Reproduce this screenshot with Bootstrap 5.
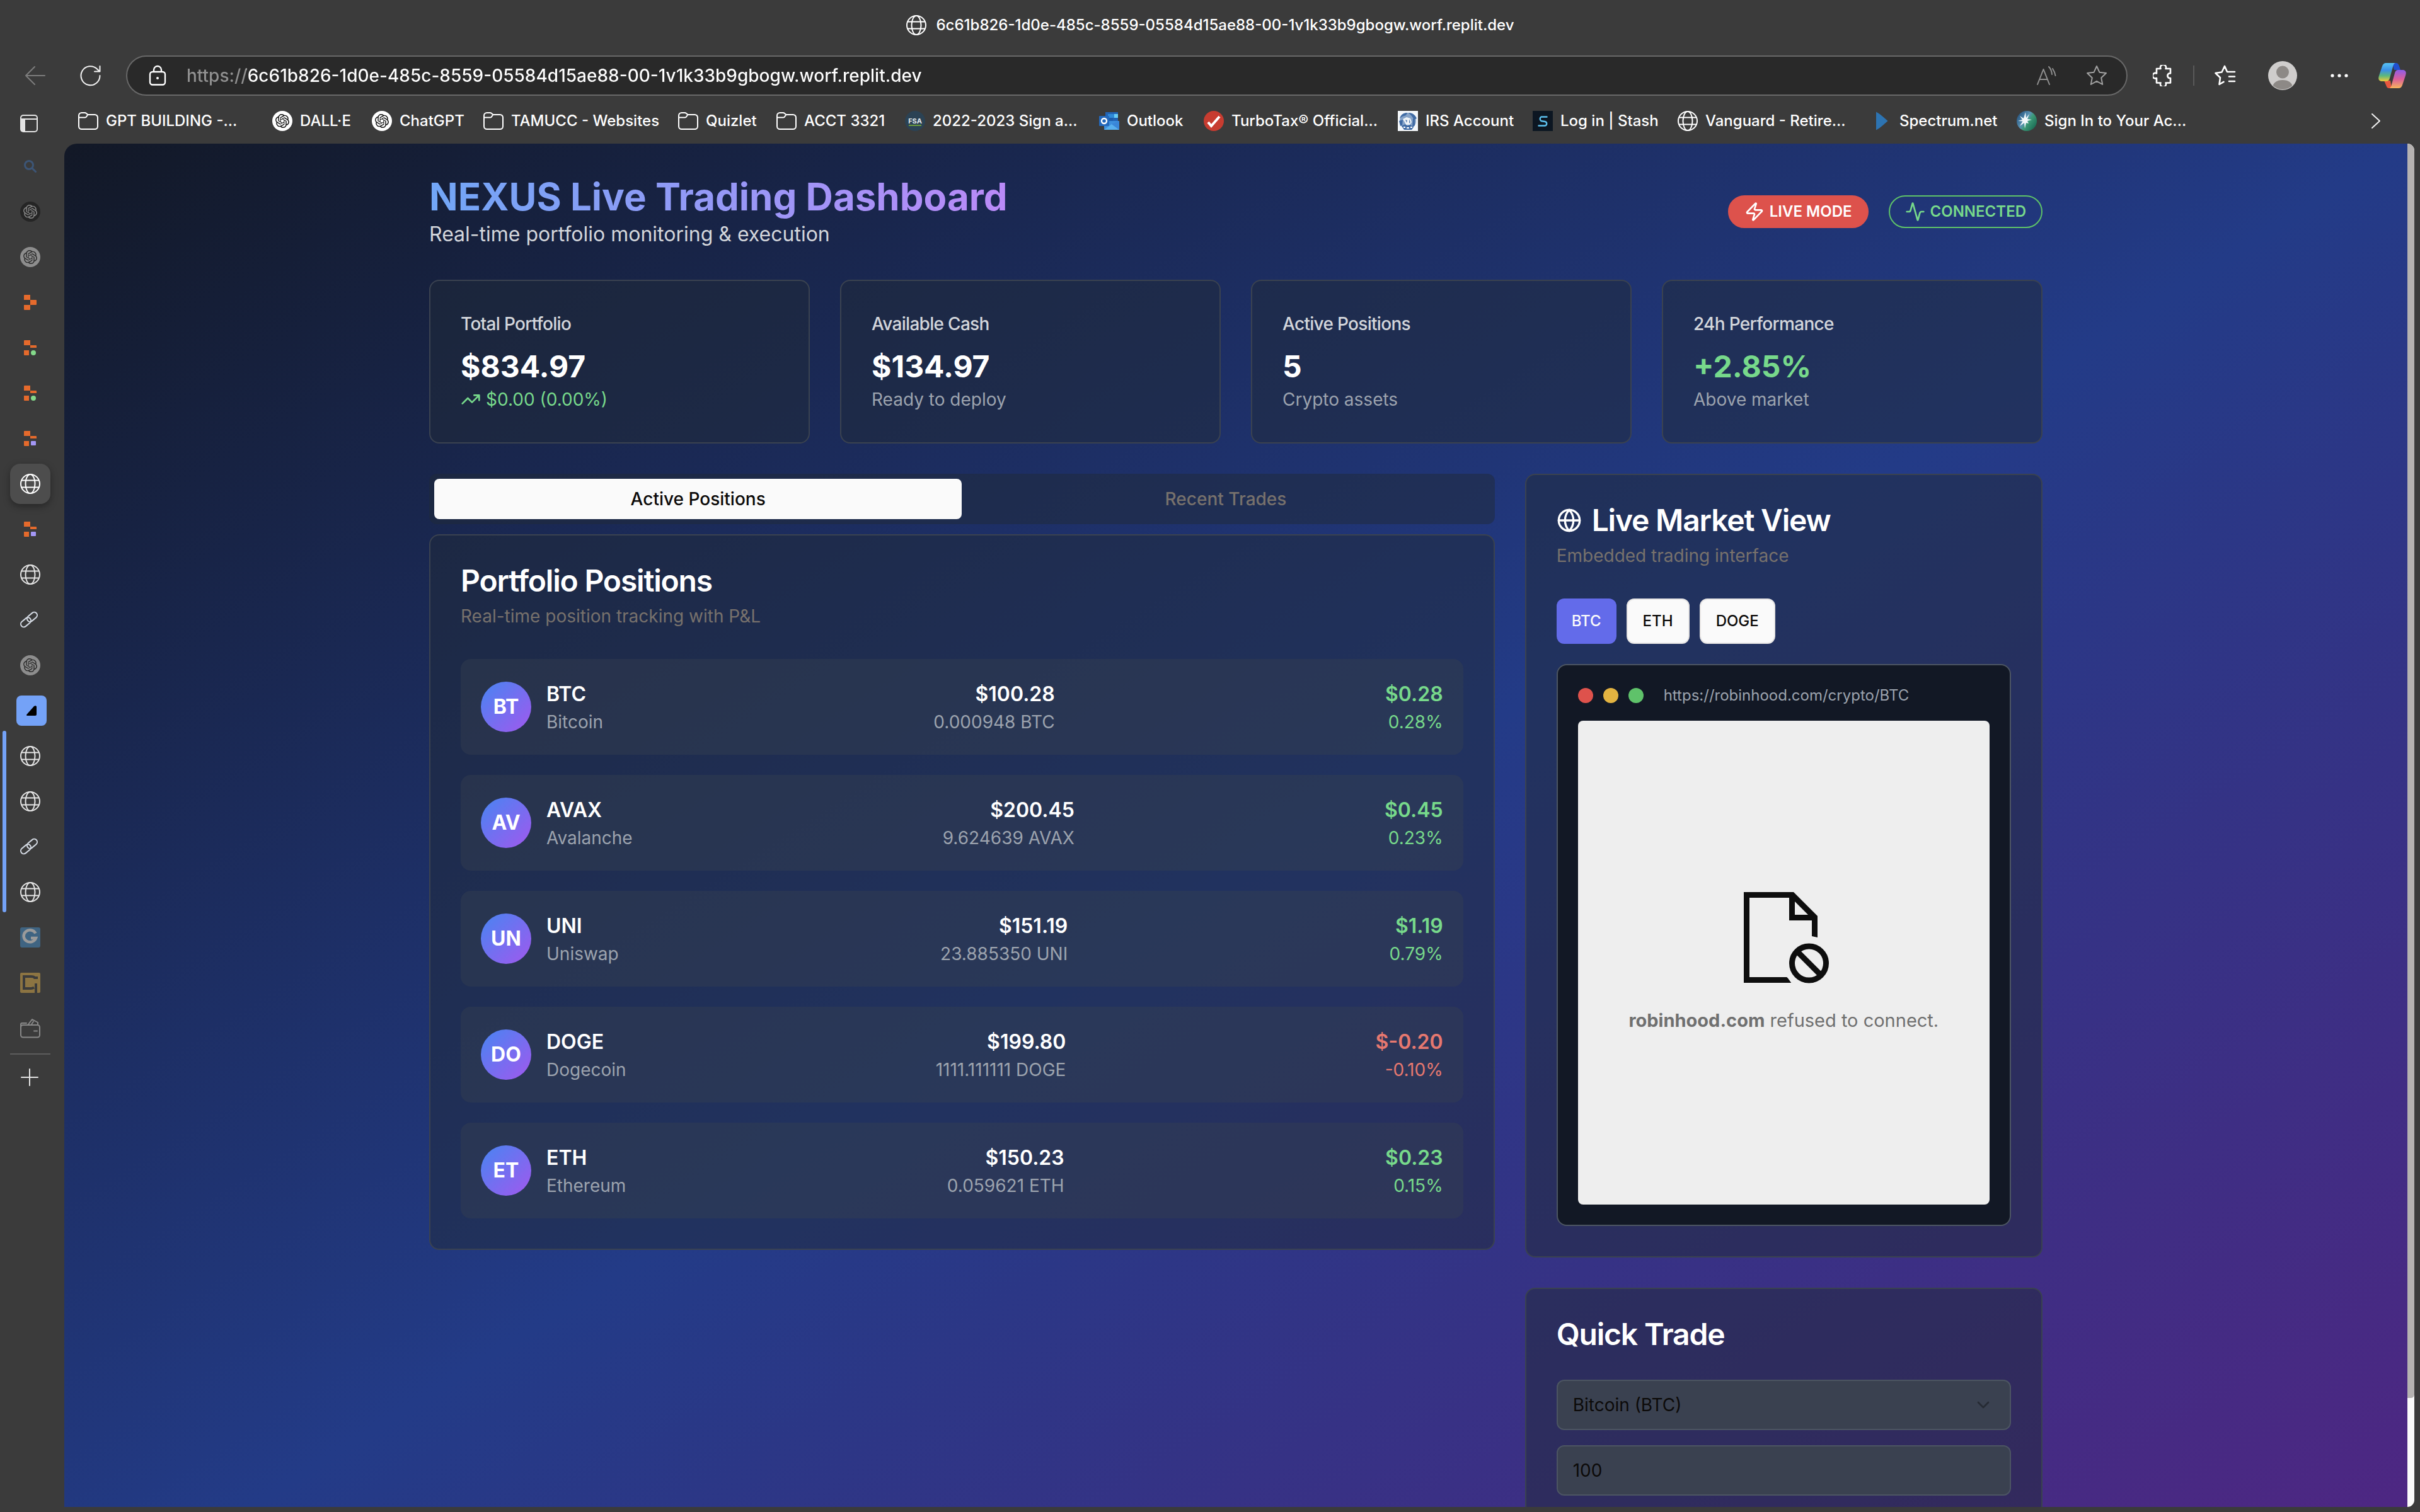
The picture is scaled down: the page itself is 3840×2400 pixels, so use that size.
<!DOCTYPE html>
<html lang="en">
<head>
<meta charset="utf-8">
<meta name="viewport" content="width=device-width, initial-scale=1">
<title>NEXUS Live Trading Dashboard</title>
<link href="https://cdn.jsdelivr.net/npm/bootstrap@5.3.0/dist/css/bootstrap.min.css" rel="stylesheet">
<style>
:root { font-size: 32px; }
body {
  font-family: Inter, "Liberation Sans", sans-serif;
  font-size: 32px; line-height: 48px;
  background: #3b3b3b; color: #fff;
  height: 100vh; overflow: hidden;
}
svg { display: block; flex: none; }
button { font-family: inherit; }
.stroke-ic { fill: none; stroke: currentColor; stroke-width: 2; stroke-linecap: round; stroke-linejoin: round; }
.fill-rest { min-width: 0; min-height: 0; }

/* window chrome */
.title-strip { height: 80px; flex: none; font-size: 24px; line-height: 32px; font-weight: 500; gap: 16px; }
.tool-strip { height: 76px; flex: none; padding: 4px 22px 0 40px; }
.ic-btn { background: none; border: 0; padding: 0; color: #f2f2f2; display: flex; align-items: center; justify-content: center; flex: none; }
.ic-back { color: #7c7c7c; margin-right: 52px; }
.ic-read { color: #909090; margin-right: 46px; }
.ic-star { color: #a0a0a0; }
.ic-ext { margin-left: 40px; }
.ic-far { margin-left: 50px; }
.ic-end { margin-left: 46px; }
.addr { height: 64px; margin-left: 36px; border: 2px solid #686868; border-radius: 32px; background: #292929; padding: 0 30px 0 34px; color: #909090; }
.addr input {
  border: 0; outline: 0; padding: 0; min-width: 0; height: 48px;
  font-size: 28px; font-weight: 500; color: transparent;
  background: linear-gradient(90deg, #909090 95px, #fff 95px);
  -webkit-background-clip: text; background-clip: text;
}
.tool-rule { width: 2px; height: 32px; background: #5a5a5a; }

.side { width: 102px; position: relative; }
.side .ic-btn { width: 96px; height: 72px; color: #e4e4e4; }
.side .cell-top { width: 92px; padding-top: 8px; }
.side .cell-add { width: 94px; }
.side .pill { width: 64px; height: 64px; border-radius: 16px; background: #4d4d4d; box-shadow: 0 4px 12px rgba(0,0,0,.35); display: flex; align-items: center; justify-content: center; color: #fff; }
.side .tile { width: 48px; height: 48px; border-radius: 8px; background: #74a2f7; margin-left: 4px; display: flex; align-items: center; justify-content: center; }
.side .group-bar { position: absolute; left: 4px; top: 1004px; width: 6px; height: 288px; border-radius: 3px; background: #74a2f7; }
.side hr { width: 64px; margin: 4px 0 0 16px; border-top: 2px solid #5c5c5c; opacity: 1; }

.marks {
  height: 72px; flex: none; padding-left: 22px; display: grid; align-items: center;
  grid-template-columns: 308px 158px 177px 309px 156px 204px 308px 166px 308px 214px 230px 308px 230px 308px 1fr;
  font-size: 24px; line-height: 32px; font-weight: 500;
}
.marks a { color: #fff; text-decoration: none; display: flex; align-items: center; gap: 12px; white-space: nowrap; }
.marks .ic-btn { justify-content: flex-end; padding-right: 62px; }

/* page */
.view { border-radius: 20px 0 0 0; overflow: hidden; }
.scroller { width: 11px; background: #fafafa; border-radius: 0 12px 12px 0; margin-right: 9px; overflow: hidden; }
.scroller div { height: 92%; background: #b5b2b1; border-radius: 0 12px 6px 0; }
.page { background: linear-gradient(to bottom right, #121826, #233b87 50%, #512582); min-height: 100%; }
.wrap { max-width: 2560px; margin: 0 auto; }
.brand-title {
  font-size: 60px; line-height: 72px; font-weight: 700; margin: 0;
  background: linear-gradient(90deg, #71a6f6, #ba8af7);
  -webkit-background-clip: text; background-clip: text; color: transparent;
}
.soft { color: #d3d6db; }
.faint { color: #9ca3ae; }
.stone { color: #77716c; }
.up { color: #77d98b; }
.down { color: #e6786f; }
.t28 { font-size: 28px; line-height: 40px; }
.t24 { font-size: 24px; line-height: 32px; }
.tile-label { font-size: 28px; line-height: 40px; font-weight: 500; letter-spacing: -.025em; color: #d3d6db; }
.chip { display: inline-flex; align-items: center; gap: 8px; height: 52px; padding: 0 24px; border: 2px solid; border-radius: 26px; font-size: 24px; line-height: 32px; font-weight: 600; }
.chip-live { background: #dd524c; border-color: #dd524c; }
.chip-on { border-color: #5ec269; color: #77d98b; }
.panel { background: rgba(31,41,55,.5); border: 2px solid #3a4250; border-radius: 16px; padding: 48px; }
.figure-num { font-size: 48px; line-height: 64px; font-weight: 700; margin-top: 16px; }
.panel h2 { font-size: 48px; line-height: 48px; font-weight: 600; letter-spacing: -.025em; margin: 0 0 12px; }
.switch { background: rgba(31,41,55,.5); border-radius: 12px; padding: 8px; margin-bottom: 16px; }
.switch button { flex: 1 1 0; height: 64px; border: 0; border-radius: 8px; background: none; color: #77716c; font-size: 28px; line-height: 40px; font-weight: 500; }
.switch button.on { background: #fafafa; color: #0c0a09; }
.pos { background: rgba(55,65,81,.4); border-radius: 16px; padding: 32px; }
.pos + .pos { margin-top: 32px; }
.asset { display: flex; align-items: center; gap: 24px; }
.coin { width: 80px; height: 80px; border-radius: 50%; background: linear-gradient(to bottom right, #4785f2, #a158ee); font-weight: 700; display: flex; align-items: center; justify-content: center; }
.pick { height: 72px; padding: 0 24px; border-radius: 12px; font-size: 24px; line-height: 32px; font-weight: 500; background: #fafafa; border: 2px solid #e7e5e4; color: #0c0a09; }
.pick.on { background: #636bea; border: 0; color: #fafafa; }
.mock { background: #121825; border: 2px solid #4c5562; border-radius: 16px; padding: 32px; margin-top: 32px; }
.lamp { width: 24px; height: 24px; border-radius: 50%; }
.lamp-red { background: #de524c; }
.lamp-amber { background: #e3b341; }
.lamp-green { background: #5fc26a; }
.frame { background: #eee; border-radius: 8px; height: 768px; margin-top: 24px; gap: 40px; color: #707070; font-size: 29px; line-height: 40px; }
.frame svg { overflow: visible; }
.field { height: 80px; border: 2px solid #4c5562; border-radius: 12px; background-color: #3a4150; color: #0c0a09; font-size: 28px; line-height: 40px; padding: 0 24px; }
.field.form-select { background-position: right 26px center; background-size: 32px 32px;
  background-image: url("data:image/svg+xml,%3csvg xmlns='http://www.w3.org/2000/svg' viewBox='0 0 24 24' fill='none' stroke='%23262b34' stroke-width='2' stroke-linecap='round' stroke-linejoin='round'%3e%3cpath d='m6 9 6 6 6-6'/%3e%3c/svg%3e"); }
.field + .field { margin-top: 24px; }
.trade { padding-bottom: 154px; margin-top: 48px; }
.panel.trade h2 { margin-bottom: 48px; }
</style>
</head>
<body class="d-flex flex-column">

<svg width="0" height="0" class="position-absolute" aria-hidden="true">
  <symbol id="globe" viewBox="0 0 32 32"><g fill="none" stroke="currentColor" stroke-width="2"><circle cx="16" cy="16" r="15"/><ellipse cx="16" cy="16" rx="7.5" ry="15"/><path d="M2 10.500h28M2 21.500h28"/></g></symbol>
  <symbol id="folder" viewBox="0 0 32 32"><path d="M1 7.500A4.500 4.500 0 0 1 5.500 3h5.200c.8 0 1.500.3 2 .8L15.500 6H26.500A4.500 4.500 0 0 1 31 10.500v14A4.500 4.500 0 0 1 26.500 29h-21A4.500 4.500 0 0 1 1 24.500zM1 10.500h9.700c.8 0 1.500-.3 2-.8L15.500 6" fill="none" stroke="currentColor" stroke-width="2"/></symbol>
  <symbol id="knot" viewBox="0 0 24 24"><path fill="currentColor" d="M22.2819 9.8211a5.9847 5.9847 0 0 0-.5157-4.9108 6.0462 6.0462 0 0 0-6.5098-2.9A6.0651 6.0651 0 0 0 4.9807 4.1818a5.9847 5.9847 0 0 0-3.9977 2.9 6.0462 6.0462 0 0 0 .7427 7.0966 5.98 5.98 0 0 0 .511 4.9107 6.051 6.051 0 0 0 6.5146 2.9001A5.9847 5.9847 0 0 0 13.2599 24a6.0557 6.0557 0 0 0 5.7718-4.2058 5.9894 5.9894 0 0 0 3.9977-2.9001 6.0557 6.0557 0 0 0-.7475-7.0729zm-9.022 12.6081a4.4755 4.4755 0 0 1-2.8764-1.0408l.1419-.0804 4.7783-2.7582a.7948.7948 0 0 0 .3927-.6813v-6.7369l2.02 1.1686a.071.071 0 0 1 .038.052v5.5826a4.504 4.504 0 0 1-4.4945 4.4944zm-9.6607-4.1254a4.4708 4.4708 0 0 1-.5346-3.0137l.142.0852 4.783 2.7582a.7712.7712 0 0 0 .7806 0l5.8428-3.3685v2.3324a.0804.0804 0 0 1-.0332.0615L9.74 19.9502a4.4992 4.4992 0 0 1-6.1408-1.6464zM2.3408 7.8956a4.485 4.485 0 0 1 2.3655-1.9728V11.6a.7664.7664 0 0 0 .3879.6765l5.8144 3.3543-2.0201 1.1685a.0757.0757 0 0 1-.071 0l-4.8303-2.7865A4.504 4.504 0 0 1 2.3408 7.872zm16.5963 3.8558L13.1038 8.364 15.1192 7.2a.0757.0757 0 0 1 .071 0l4.8303 2.7913a4.4944 4.4944 0 0 1-.6765 8.1042v-5.6772a.79.79 0 0 0-.407-.667zm2.0107-3.0231l-.142-.0852-4.7735-2.7818a.7759.7759 0 0 0-.7854 0L9.409 9.2297V6.8974a.0662.0662 0 0 1 .0284-.0615l4.8303-2.7866a4.4992 4.4992 0 0 1 6.6802 4.66zM8.3065 12.863l-2.02-1.1638a.0804.0804 0 0 1-.038-.0567V6.0742a4.4992 4.4992 0 0 1 7.3757-3.4537l-.142.0805L8.704 5.459a.7948.7948 0 0 0-.3927.6813zm1.0976-2.3654l2.602-1.4998 2.6069 1.4998v2.9994l-2.5974 1.4997-2.6067-1.4997Z"/></symbol>
  <symbol id="replit" viewBox="0 0 20 24"><path fill="#e56a2c" d="M1 0h9v8H0V1a1 1 0 0 1 1-1zM10 8h9a1 1 0 0 1 1 1v6a1 1 0 0 1-1 1h-9zM0 16h10v7a1 1 0 0 1-1 1H1a1 1 0 0 1-1-1z"/></symbol>
  <symbol id="replit-part" viewBox="0 0 20 24"><path fill="#e56a2c" d="M1 0h9v8H0V1a1 1 0 0 1 1-1zM10 8h9a1 1 0 0 1 1 1v3H10zM0 16h8v8H1a1 1 0 0 1-1-1z"/></symbol>
  <symbol id="chain" viewBox="0 0 32 32"><g fill="none" stroke="#d5dbe4" stroke-width="2"><rect x="0" y="15" width="18" height="9.500" rx="4.750" transform="rotate(-40 9 19.750)"/><rect x="10" y="6.500" width="18" height="9.500" rx="4.750" transform="rotate(-40 19 11.250)"/></g></symbol>
</svg>

<div class="title-strip d-flex align-items-center justify-content-center">
  <svg width="32" height="32"><use href="#globe"/></svg>
  <span>6c61b826-1d0e-485c-8559-05584d15ae88-00-1v1k33b9gbogw.worf.replit.dev</span>
</div>

<div class="tool-strip d-flex align-items-center">
  <button class="ic-btn ic-back" aria-label="Back"><svg width="32" height="32" viewBox="0 0 32 32" class="stroke-ic"><path d="M31 16H1M15 2 1 16l14 14"/></svg></button>
  <button class="ic-btn" aria-label="Reload"><svg width="40" height="36" viewBox="0 0 40 36" class="stroke-ic"><path d="M34.500 18A15 15 0 1 1 30 7.500L34 11.500M34.500 3v8.500H26"/></svg></button>
  <div class="addr d-flex align-items-center flex-grow-1">
    <svg width="28" height="34" viewBox="0 0 28 34" class="text-white me-3"><g fill="none" stroke="currentColor" stroke-width="2.400"><rect x="2" y="11" width="24" height="20.500" rx="4"/><path d="M8 11V8a6 6 0 0 1 12 0v3"/></g><circle cx="14" cy="21" r="2" fill="currentColor"/></svg>
    <input class="flex-grow-1" type="text" aria-label="Address" value="https://6c61b826-1d0e-485c-8559-05584d15ae88-00-1v1k33b9gbogw.worf.replit.dev">
    <button class="ic-btn ic-read" aria-label="Read aloud"><svg width="32" height="32" viewBox="0 0 32 32" class="stroke-ic"><path d="M1 30 10.500 6 20 30M4.500 22h12M19 2c3 3 4.500 7 5 12M25 5c2 3 4 7 4.500 11"/></svg></button>
    <button class="ic-btn ic-star" aria-label="Add to favorites"><svg width="34" height="34" viewBox="0 0 34 34" class="stroke-ic"><path d="m17 2 4.500 9.800 10.500 1.300-7.800 7.300 2 10.600L17 25.800 7.800 31l2-10.600L2 13.100l10.500-1.300z"/></svg></button>
  </div>
  <button class="ic-btn ic-ext" aria-label="Extensions"><svg width="32" height="34" viewBox="0 0 32 34"><path fill="none" stroke="#fff" stroke-width="2.600" stroke-linejoin="round" d="M6 6h6.500a4.500 4.500 0 1 1 8 0H28v7.500h-2a4 4 0 0 0 0 7.500h2v7.500h-7.500a4.500 4.500 0 1 1-8 0H6V21a4.300 4.300 0 1 1 0-7.500z"/></svg></button>
  <div class="tool-rule ms-3 me-3"></div>
  <button class="ic-btn" aria-label="Favorites"><svg width="34" height="34" viewBox="0 0 34 34" fill="none" stroke="#fff" stroke-width="2.600" stroke-linecap="round" stroke-linejoin="round"><path d="M22 11h-2L16 2l-4.500 9.500L1.500 13l7.500 7.200L7.500 31l7-4.200M22 11h10M23 18.500h9M23 26h9"/></svg></button>
  <button class="ic-btn ic-far" aria-label="Profile"><svg width="48" height="48" viewBox="0 0 48 48"><defs><clipPath id="face"><circle cx="24" cy="24" r="22"/></clipPath></defs><circle cx="24" cy="24" r="23" fill="#cfcdcc"/><g clip-path="url(#face)" fill="#8d8986"><circle cx="24" cy="18.500" r="10"/><path d="M7 48c0-12 7-17 17-17s17 5 17 17z"/></g></svg></button>
  <button class="ic-btn ic-far" aria-label="More"><svg width="32" height="8" viewBox="0 0 32 8" fill="#fff"><circle cx="5" cy="4" r="2.600"/><circle cx="16" cy="4" r="2.600"/><circle cx="27" cy="4" r="2.600"/></svg></button>
  <button class="ic-btn ic-end" aria-label="Copilot"><svg width="44" height="40" viewBox="0 0 44 40"><defs>
    <linearGradient id="cpa" x1="0" y1="0" x2="0" y2="1"><stop offset="0" stop-color="#58c4f6"/><stop offset=".4" stop-color="#3b8fe6"/><stop offset=".7" stop-color="#5cb87c"/><stop offset="1" stop-color="#f0c83a"/></linearGradient>
    <linearGradient id="cpb" x1="0" y1="0" x2="0" y2="1"><stop offset="0" stop-color="#8f5ce8"/><stop offset=".5" stop-color="#dc5f9a"/><stop offset="1" stop-color="#f6b45c"/></linearGradient></defs>
    <path d="M22 0h6c3 0 4 2 5 5l2 6H25z" fill="#2050d0"/><path d="M9 28h10l2 12h-4c-3 0-4-2-5-5z" fill="#e8573f"/>
    <path d="M12 0h16c-3 0-4 2-5 6l-5 18c-1 4-3 5-6 5H6c-5 0-7-3-5-9l5-15C7 2 9 0 12 0z" fill="url(#cpa)"/><path d="M32 40H16c3 0 4-2 5-6l5-18c1-4 3-5 6-5h6c5 0 7 3 5 9l-5 15c-1 3-3 5-6 5z" fill="url(#cpb)"/></svg></button>
</div>

<div class="d-flex flex-grow-1 fill-rest">
  <nav class="side d-flex flex-column flex-shrink-0" aria-label="Vertical tabs">
    <button class="ic-btn cell-top" aria-label="Toggle tabs"><svg width="28" height="28" viewBox="0 0 28 28"><rect x="1" y="1" width="26" height="26" rx="4" fill="none" stroke="currentColor" stroke-width="2"/><path d="M1 7h26" stroke="currentColor" stroke-width="2"/><path d="M1 7h7v20H4a3 3 0 0 1-3-3z" fill="currentColor"/></svg></button>
    <button class="ic-btn" aria-label="Search tab"><svg width="20" height="20" viewBox="0 0 20 20" fill="none" stroke="#3c5576" stroke-width="3" stroke-linecap="round"><circle cx="8" cy="8" r="6.500"/><path d="m13 13 5.500 5.500"/></svg></button>
    <button class="ic-btn" aria-label="Tab"><svg width="32" height="32" viewBox="0 0 32 32"><circle cx="16" cy="16" r="16" fill="#252525"/><use href="#knot" x="5" y="5" width="22" height="22" color="#8b8b8b"/></svg></button>
    <button class="ic-btn" aria-label="Tab"><svg width="32" height="32" viewBox="0 0 32 32"><circle cx="16" cy="16" r="16" fill="#8d8d8d"/><use href="#knot" x="5" y="5" width="22" height="22" color="#2c2c2c"/></svg></button>
    <button class="ic-btn" aria-label="Tab"><svg width="20" height="24"><use href="#replit"/></svg></button>
    <button class="ic-btn" aria-label="Tab"><svg width="20" height="24"><use href="#replit-part"/><circle cx="15" cy="20" r="4" fill="#84d98a"/></svg></button>
    <button class="ic-btn" aria-label="Tab"><svg width="20" height="24"><use href="#replit-part"/><circle cx="15" cy="20" r="4" fill="#84d98a"/></svg></button>
    <button class="ic-btn" aria-label="Tab"><svg width="20" height="24"><use href="#replit-part"/><rect x="11" y="16" width="8" height="7" rx="1" fill="#a397f5"/></svg></button>
    <button class="ic-btn" aria-label="Current tab"><span class="pill"><svg width="32" height="32"><use href="#globe"/></svg></span></button>
    <button class="ic-btn" aria-label="Tab"><svg width="20" height="24"><use href="#replit-part"/><rect x="11" y="16" width="8" height="7" rx="1" fill="#a397f5"/></svg></button>
    <button class="ic-btn" aria-label="Tab"><svg width="32" height="32"><use href="#globe"/></svg></button>
    <button class="ic-btn" aria-label="Tab"><svg width="32" height="32"><use href="#chain"/></svg></button>
    <button class="ic-btn" aria-label="Tab"><svg width="32" height="32" viewBox="0 0 32 32"><circle cx="16" cy="16" r="16" fill="#8d8d8d"/><use href="#knot" x="5" y="5" width="22" height="22" color="#2c2c2c"/></svg></button>
    <button class="ic-btn" aria-label="Tab group"><span class="tile"><svg width="16" height="16" viewBox="0 0 16 16"><path d="M1.500 16c-1.500 0-1.800-1-1-2L12 1c1.500-1.500 4-1 4 1v12a2 2 0 0 1-2 2z" fill="#000"/></svg></span></button>
    <button class="ic-btn" aria-label="Tab"><svg width="32" height="32"><use href="#globe"/></svg></button>
    <button class="ic-btn" aria-label="Tab"><svg width="32" height="32"><use href="#globe"/></svg></button>
    <button class="ic-btn" aria-label="Tab"><svg width="32" height="32"><use href="#chain"/></svg></button>
    <button class="ic-btn" aria-label="Tab"><svg width="32" height="32"><use href="#globe"/></svg></button>
    <button class="ic-btn" aria-label="Tab"><svg width="32" height="32" viewBox="0 0 32 32"><rect width="32" height="32" rx="3" fill="#3f6482"/><path d="M24.500 9.500A10 9.500 0 1 0 25 17h-8" fill="none" stroke="#9a9a9a" stroke-width="4.500"/></svg></button>
    <button class="ic-btn" aria-label="Tab"><svg width="32" height="32" viewBox="0 0 32 32"><rect width="32" height="32" rx="2" fill="#8c7442"/><path d="M28 8H23C22 6 20 6 17 6H6V25H17C20 25 21 24 22 23.500M25 32V17" fill="none" stroke="#3b3b3b" stroke-width="4"/></svg></button>
    <button class="ic-btn" aria-label="Tab"><svg width="32" height="32" viewBox="0 0 32 32" fill="none" stroke="#888" stroke-width="2" stroke-linecap="round" stroke-linejoin="round"><rect x="1" y="11" width="30" height="19.500" rx="3.500"/><path d="M1 14V10a2 2 0 0 1 2-2h7M22 20.500h5M13 10l6-8 9 5v3M18 10l3-4.500"/></svg></button>
    <hr>
    <button class="ic-btn cell-add" aria-label="New tab"><svg width="28" height="28" viewBox="0 0 28 28" class="stroke-ic"><path d="M14 1v26M1 14h26"/></svg></button>
    <div class="group-bar"></div>
  </nav>

  <div class="d-flex flex-column flex-grow-1 fill-rest">
    <nav class="marks" aria-label="Favorites bar">
      <a href="#"><svg width="32" height="32"><use href="#folder"/></svg>GPT BUILDING -...</a>
      <a href="#"><svg width="32" height="32" viewBox="0 0 32 32"><circle cx="16" cy="16" r="16" fill="#fff"/><use href="#knot" x="5" y="5" width="22" height="22" color="#111"/></svg>DALL·E</a>
      <a href="#"><svg width="32" height="32" viewBox="0 0 32 32"><circle cx="16" cy="16" r="16" fill="#fff"/><use href="#knot" x="5" y="5" width="22" height="22" color="#111"/></svg>ChatGPT</a>
      <a href="#"><svg width="32" height="32"><use href="#folder"/></svg>TAMUCC - Websites</a>
      <a href="#"><svg width="32" height="32"><use href="#folder"/></svg>Quizlet</a>
      <a href="#"><svg width="32" height="32"><use href="#folder"/></svg>ACCT 3321</a>
      <a href="#"><svg width="32" height="32" viewBox="0 0 32 32"><circle cx="16" cy="16" r="16" fill="#2b4254"/><text x="16" y="20" text-anchor="middle" font-size="11" font-weight="700" fill="#e4e9ec">FSA</text><path d="M6 22h20v2H6z" fill="#6a9a3c"/></svg>2022-2023 Sign a...</a>
      <a href="#"><svg width="32" height="32" viewBox="0 0 32 32"><path d="M10 2h20v14H10z" fill="#2263b4"/><path d="M14 5h10v6H14z" fill="#2f8ad8"/><path d="M24 5h6v6h-6z" fill="#68cdf6"/><path d="M14 11h8v5h-8z" fill="#1d5cab"/><path d="M8 16h24v14H8z" fill="#3d8fdd"/><path d="m8 30 12-9 12 9z" fill="#58b0ee"/><path d="M32 16v14L20 21z" fill="#3a86d8"/><rect y="8" width="16" height="16" rx="1" fill="#2468bb"/><circle cx="8" cy="16" r="4" fill="none" stroke="#fff" stroke-width="2.400"/></svg>Outlook</a>
      <a href="#"><svg width="32" height="32" viewBox="0 0 32 32"><circle cx="16" cy="16" r="16" fill="#c73c30"/><path d="m7 18 5 6L25 9" fill="none" stroke="#fff" stroke-width="4"/></svg>TurboTax® Official...</a>
      <a href="#"><svg width="32" height="32" viewBox="0 0 32 32"><path d="M0 0h32v32H0z" fill="#f4f7fa"/><circle cx="16" cy="16" r="13" fill="#86a3c8"/><path d="M3 12C5 5 10 3 15 3l-2 4-6 2zM2 16l6-2-1 9-3 1zM17 3c7 0 11 4 13 9l-4 2-4-6zM24 12l3 2v9l-4 3zM6 24l6-3 3 3 5-2 5 4-3 4H10z" fill="#3f6aa4"/><path d="m8 13 6-3 6 2 2 6-3 4h-6l-2-4z" fill="#eef3f8"/><path d="m12 14 3 1-1 4zM18 13l2 5-2 2z" fill="#5b80b2"/><path d="M9 26h3M14 27h4M20 26h3" stroke="#fff" stroke-width="2"/></svg>IRS Account</a>
      <a href="#"><svg width="32" height="32" viewBox="0 0 32 32"><path d="M0 0h32v32H0z" fill="#0c1622"/><path d="M22.500 9.500h-9a3.800 3.800 0 0 0 0 6.500l6 1a3.300 3.300 0 0 1 0 6.500H9.500" fill="none" stroke="#5cc0ee" stroke-width="2.400" stroke-linecap="round"/></svg>Log in | Stash</a>
      <a href="#"><svg width="32" height="32"><use href="#globe"/></svg>Vanguard - Retire...</a>
      <a href="#"><svg width="32" height="32" viewBox="0 0 32 32"><path d="M7 1.500v29C15 26 21 20 25.500 16 21 12 15 6 7 1.500z" fill="#2d74b2"/></svg>Spectrum.net</a>
      <a href="#"><svg width="32" height="32" viewBox="0 0 32 32"><defs><linearGradient id="orb" x1="0" y1="0" x2="1" y2=".7"><stop offset="0" stop-color="#16406f"/><stop offset=".5" stop-color="#5a93b4"/><stop offset=".65" stop-color="#3d9a78"/><stop offset="1" stop-color="#1c6d55"/></linearGradient></defs><circle cx="16" cy="16" r="16" fill="url(#orb)"/><path d="m14 2 1 9L20 5l-3 8 7 1-7 2 2 4-4-1-2 9-1-9-7 5 4.500-7.500L2 16l7-2L5 8l6 4z" fill="#f2f8fb"/></svg>Sign In to Your Ac...</a>
      <button class="ic-btn" aria-label="More favorites"><svg width="16" height="26" viewBox="0 0 16 26" class="stroke-ic"><path d="m2 2 12 11L2 24"/></svg></button>
    </nav>

    <div class="d-flex flex-grow-1 fill-rest mb-1">
      <main class="view flex-grow-1">
        <div class="page p-4">
          <div class="wrap">
            <header class="d-flex justify-content-between align-items-center mb-4">
              <div>
                <h1 class="brand-title">NEXUS Live Trading Dashboard</h1>
                <div class="soft">Real-time portfolio monitoring &amp; execution</div>
              </div>
              <div class="d-flex gap-3">
                <span class="chip chip-live"><svg width="32" height="32" viewBox="0 0 24 24" class="stroke-ic"><path d="M4 14a1 1 0 0 1-.78-1.630l9.900-10.200a.5.5 0 0 1 .86.46l-1.920 6.020A1 1 0 0 0 13 10h7a1 1 0 0 1 .78 1.630l-9.900 10.200a.5.5 0 0 1-.86-.46l1.920-6.020A1 1 0 0 0 11 14z"/></svg>LIVE MODE</span>
                <span class="chip chip-on"><svg width="32" height="32" viewBox="0 0 24 24" class="stroke-ic"><path d="M22 12h-2.480a2 2 0 0 0-1.930 1.460l-2.350 8.360a.25.25 0 0 1-.48 0L9.240 2.180a.25.25 0 0 0-.48 0l-2.350 8.360A2 2 0 0 1 4.490 12H2"/></svg>CONNECTED</span>
              </div>
            </header>

            <section class="row mb-4">
              <div class="col-3"><div class="panel">
                <div class="tile-label">Total Portfolio</div>
                <div class="figure-num">$834.97</div>
                <div class="t28 up d-flex align-items-center gap-1"><svg width="32" height="32" viewBox="0 0 24 24" class="stroke-ic"><path d="M22 7 13.500 15.500 8.500 10.500 2 17M16 7h6v6"/></svg>$0.00 (0.00%)</div>
              </div></div>
              <div class="col-3"><div class="panel">
                <div class="tile-label">Available Cash</div>
                <div class="figure-num">$134.97</div>
                <div class="t28 faint">Ready to deploy</div>
              </div></div>
              <div class="col-3"><div class="panel">
                <div class="tile-label">Active Positions</div>
                <div class="figure-num">5</div>
                <div class="t28 faint">Crypto assets</div>
              </div></div>
              <div class="col-3"><div class="panel">
                <div class="tile-label">24h Performance</div>
                <div class="figure-num up">+2.85%</div>
                <div class="t28 faint">Above market</div>
              </div></div>
            </section>

            <div class="row align-items-start">
              <section class="col-8">
                <div class="switch d-flex" role="tablist">
                  <button class="on" role="tab" aria-selected="true">Active Positions</button>
                  <button role="tab" aria-selected="false">Recent Trades</button>
                </div>
                <div class="panel">
                  <h2>Portfolio Positions</h2>
                  <div class="t28 stone mb-4">Real-time position tracking with P&amp;L</div>

                  <div class="pos d-flex justify-content-between align-items-center">
                    <div class="asset"><div class="coin">BT</div><div><div class="fw-semibold">BTC</div><div class="t28 faint">Bitcoin</div></div></div>
                    <div class="text-end"><div class="fw-semibold">$100.28</div><div class="t28 faint">0.000948 BTC</div></div>
                    <div class="text-end up"><div class="fw-semibold">$0.28</div><div class="t28">0.28%</div></div>
                  </div>
                  <div class="pos d-flex justify-content-between align-items-center">
                    <div class="asset"><div class="coin">AV</div><div><div class="fw-semibold">AVAX</div><div class="t28 faint">Avalanche</div></div></div>
                    <div class="text-end"><div class="fw-semibold">$200.45</div><div class="t28 faint">9.624639 AVAX</div></div>
                    <div class="text-end up"><div class="fw-semibold">$0.45</div><div class="t28">0.23%</div></div>
                  </div>
                  <div class="pos d-flex justify-content-between align-items-center">
                    <div class="asset"><div class="coin">UN</div><div><div class="fw-semibold">UNI</div><div class="t28 faint">Uniswap</div></div></div>
                    <div class="text-end"><div class="fw-semibold">$151.19</div><div class="t28 faint">23.885350 UNI</div></div>
                    <div class="text-end up"><div class="fw-semibold">$1.19</div><div class="t28">0.79%</div></div>
                  </div>
                  <div class="pos d-flex justify-content-between align-items-center">
                    <div class="asset"><div class="coin">DO</div><div><div class="fw-semibold">DOGE</div><div class="t28 faint">Dogecoin</div></div></div>
                    <div class="text-end"><div class="fw-semibold">$199.80</div><div class="t28 faint">1111.111111 DOGE</div></div>
                    <div class="text-end down"><div class="fw-semibold">$-0.20</div><div class="t28">-0.10%</div></div>
                  </div>
                  <div class="pos d-flex justify-content-between align-items-center">
                    <div class="asset"><div class="coin">ET</div><div><div class="fw-semibold">ETH</div><div class="t28 faint">Ethereum</div></div></div>
                    <div class="text-end"><div class="fw-semibold">$150.23</div><div class="t28 faint">0.059621 ETH</div></div>
                    <div class="text-end up"><div class="fw-semibold">$0.23</div><div class="t28">0.15%</div></div>
                  </div>
                </div>
              </section>

              <aside class="col-4">
                <div class="panel">
                  <h2 class="d-flex align-items-center gap-2"><svg width="40" height="40" viewBox="0 0 24 24" class="stroke-ic"><circle cx="12" cy="12" r="10"/><path d="M12 2a14.500 14.500 0 0 0 0 20 14.500 14.500 0 0 0 0-20M2 12h20"/></svg>Live Market View</h2>
                  <div class="t28 stone mb-4">Embedded trading interface</div>
                  <div class="d-flex gap-2">
                    <button class="pick on">BTC</button>
                    <button class="pick">ETH</button>
                    <button class="pick">DOGE</button>
                  </div>
                  <div class="mock">
                    <div class="d-flex align-items-center gap-2">
                      <span class="lamp lamp-red"></span>
                      <span class="lamp lamp-amber"></span>
                      <span class="lamp lamp-green"></span>
                      <span class="t24 faint ms-2">https://robinhood.com/crypto/BTC</span>
                    </div>
                    <div class="frame d-flex flex-column align-items-center justify-content-center">
                      <svg width="126" height="144" viewBox="0 0 126 144"><path d="M83 144H0V0h79l38 38v34l-9-2V45H72V9H9v126h59zM81 15v21h21z" fill="#0e0e0e" fill-rule="evenodd"/><path d="M68 134h20v11H76z" fill="#eee"/><circle cx="103.500" cy="113" r="27" fill="none" stroke="#0e0e0e" stroke-width="9"/><path d="m84.500 94 38 38" stroke="#0e0e0e" stroke-width="9"/></svg>
                      <div><b>robinhood.com</b> refused to connect.</div>
                    </div>
                  </div>
                </div>

                <form class="panel trade">
                  <h2>Quick Trade</h2>
                  <select class="field form-select" aria-label="Asset"><option>Bitcoin (BTC)</option></select>
                  <input class="field form-control" type="text" aria-label="Amount" value="100">
                </form>
              </aside>
            </div>
          </div>
        </div>
      </main>
      <div class="scroller"><div></div></div>
    </div>
  </div>
</div>

<script src="https://cdn.jsdelivr.net/npm/bootstrap@5.3.0/dist/js/bootstrap.bundle.min.js"></script>
</body>
</html>
